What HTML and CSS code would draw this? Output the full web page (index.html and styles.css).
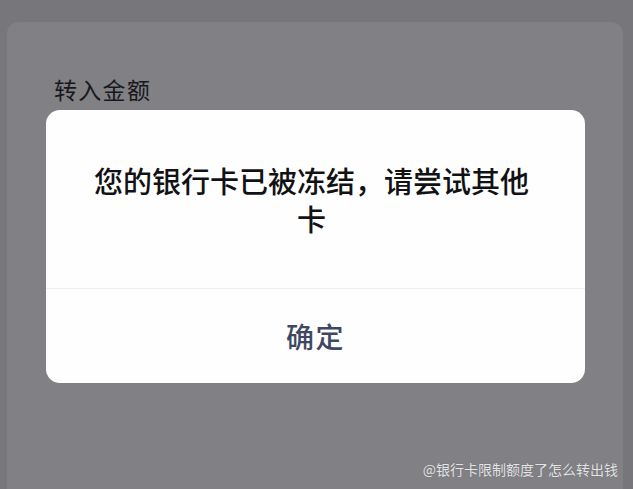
FILE: index.html
```html
<!DOCTYPE html>
<html lang="zh-CN">
<head>
<meta charset="utf-8">
<title>银行卡已被冻结</title>
<link rel="stylesheet" href="styles.css">
</head>
<body>
<div class="page">
  <div class="card">
    <div class="title">转入金额</div>
    <div class="dialog">
      <div class="dialog-body">
        <p class="message">您的银行卡已被冻结，请尝试其他卡</p>
      </div>
      <div class="dialog-actions">
        <span class="confirm">确定</span>
      </div>
    </div>
  </div>
  <div class="watermark">@银行卡限制额度了怎么转出钱</div>
</div>
</body>
</html>
```

FILE: styles.css
```css
html, body {
  margin: 0;
  padding: 0;
}
body {
  background: #77767b;
  font-family: "Noto Sans CJK SC", "Noto Sans", sans-serif;
  width: 633px;
  height: 489px;
  overflow: hidden;
}
.page {
  position: relative;
  height: 489px;
  padding: 22px 10px 0 7px;
  box-sizing: border-box;
}
.card {
  background: #808085;
  border-radius: 12px 12px 0 0;
  height: 100%;
  padding-top: 56px;
  padding-left: 47px;
  box-sizing: border-box;
}
.title {
  font-size: 23px;
  line-height: 23px;
  letter-spacing: 1.3px;
  font-weight: 400;
  color: #18181a;
}
.dialog {
  margin-top: 9px;
  margin-left: -8px;
  width: 539px;
  background: #fefeff;
  border-radius: 14px;
  overflow: hidden;
}
.dialog-body {
  height: 178px;
  display: flex;
  align-items: center;
  justify-content: center;
  padding-right: 8px;
  border-bottom: 1px solid #eeeef1;
}
.message {
  margin: 0;
  width: 450px;
  text-align: center;
  font-size: 29px;
  line-height: 38px;
  font-weight: 500;
  color: #121214;
}
.dialog-actions {
  height: 94px;
  display: flex;
  align-items: center;
  justify-content: center;
}
.confirm {
  font-size: 28px;
  line-height: 28px;
  letter-spacing: 1.5px;
  font-weight: 500;
  color: #3f4862;
}
.watermark {
  position: absolute;
  right: 15px;
  top: 461px;
  font-size: 14px;
  line-height: 16px;
  color: #e4e4e6;
  text-shadow: 0 0 1px rgba(0, 0, 0, 0.25);
}
```
